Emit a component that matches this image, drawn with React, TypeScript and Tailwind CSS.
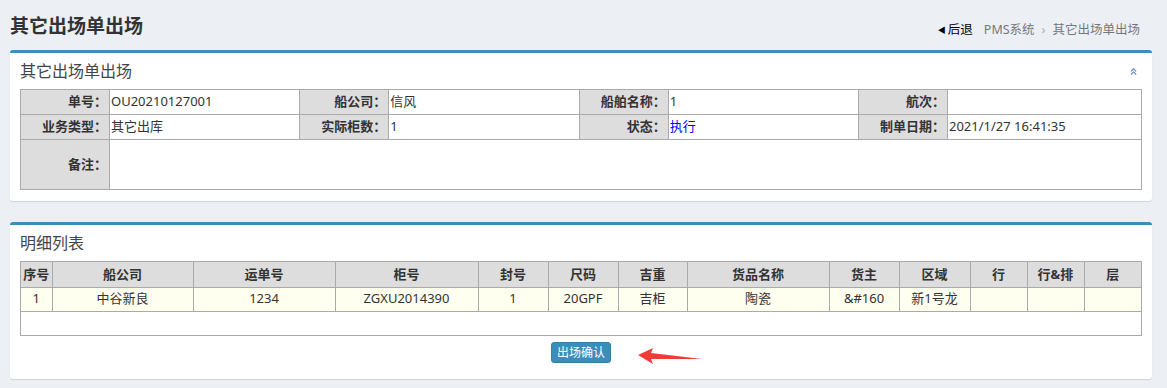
import { ChevronsUp } from "lucide-react";

const info = [
  [
    ["单号", "OU20210127001"],
    ["船公司", "信风"],
    ["船舶名称", "1"],
    ["航次", ""],
  ],
  [
    ["业务类型", "其它出库"],
    ["实际柜数", "1"],
    ["状态", "执行"],
    ["制单日期", "2021/1/27 16:41:35"],
  ],
];

const columns = [
  { title: "序号", w: "w-[31px]" },
  { title: "船公司", w: "w-[141px]" },
  { title: "运单号", w: "w-[142px]" },
  { title: "柜号", w: "w-[143px]" },
  { title: "封号", w: "w-[70px]" },
  { title: "尺码", w: "w-[70px]" },
  { title: "吉重", w: "w-[69px]" },
  { title: "货品名称", w: "w-[142px]" },
  { title: "货主", w: "w-[70px]" },
  { title: "区域", w: "w-[71px]" },
  { title: "行", w: "w-[57px]" },
  { title: "行&排", w: "w-[57px]" },
  { title: "层", w: "" },
];

const row = ["1", "中谷新良", "1234", "ZGXU2014390", "1", "20GPF", "吉柜", "陶瓷", "&#160", "新1号龙", "", "", ""];

function Box({ title, children, collapse }: { title: string; children: React.ReactNode; collapse?: boolean }) {
  return (
    <div className="bg-white border-t-[3px] border-[#3c8dbc] rounded-[3px] shadow-[0_1px_1px_rgba(0,0,0,0.12)]">
      <div className="h-[36px] flex items-center justify-between px-[10px]">
        <h3 className="text-[16px] leading-[20px] text-[#444]">{title}</h3>
        {collapse && <ChevronsUp size={11} strokeWidth={2.5} className="text-[#6b8fc7] mr-[3px]" />}
      </div>
      {children}
    </div>
  );
}

export default function App() {
  return (
    <div
      className="min-h-screen w-full bg-[#ecf0f5] pl-[10px] pr-[15px] text-[13px] text-[#333]"
      style={{ fontFamily: '"Noto Sans", "Noto Sans CJK SC", sans-serif' }}
    >
      <div className="h-[50px] flex justify-between">
        <h1 className="pt-[16px] text-[19px] leading-[20px] font-bold text-[#333]">其它出场单出场</h1>
        <div className="pt-[22px] pr-[12px] flex items-center h-[38px] text-[12.5px] leading-[16px] text-[#777]">
          <span className="text-black flex items-center">
            <span className="text-[8px] mr-[2px]">◀</span>后退
          </span>
          <span className="ml-[11px]">PMS系统</span>
          <span className="mx-[7px] text-[#aaa]">›</span>
          <span>其它出场单出场</span>
        </div>
      </div>

      <Box title="其它出场单出场" collapse>
        <div className="px-[10px] pb-[11px]">
          <table className="w-full table-fixed border-collapse">
            <colgroup>
              <col className="w-[89px]" />
              <col />
              <col className="w-[89px]" />
              <col />
              <col className="w-[89px]" />
              <col />
              <col className="w-[89px]" />
              <col className="w-[194px]" />
            </colgroup>
            <tbody>
              {info.map((r, i) => (
                <tr key={i} className="h-[25px]">
                  {r.map(([label, value]) => (
                    <>
                      <td key={label} className="bg-[#dddddd] border border-[#aaa] text-right pr-[2px] font-bold">
                        {label}：
                      </td>
                      <td className={`border border-[#aaa] pl-[1px] ${value === "执行" ? "text-[#0000ff]" : ""}`}>
                        {value}
                      </td>
                    </>
                  ))}
                </tr>
              ))}
              <tr className="h-[50px]">
                <td className="bg-[#dddddd] border border-[#aaa] text-right pr-[2px] font-bold">备注：</td>
                <td colSpan={7} className="border border-[#aaa]"></td>
              </tr>
            </tbody>
          </table>
        </div>
      </Box>

      <div className="mt-[21px]">
        <Box title="明细列表">
          <div className="px-[10px] pb-[16px]">
            <div className="border border-[#aaa] min-h-[75px]">
              <table className="w-full table-fixed border-collapse">
                <thead>
                  <tr className="h-[25px] bg-[#dddddd]">
                    {columns.map((c, i) => (
                      <th
                        key={c.title}
                        className={`${c.w} font-bold border-b border-[#aaa] ${i > 0 ? "border-l" : ""} text-center`}
                      >
                        {c.title}
                      </th>
                    ))}
                  </tr>
                </thead>
                <tbody>
                  <tr className="h-[24px] bg-[#fffff0]">
                    {row.map((v, i) => (
                      <td key={i} className={`border-b border-[#aaa] ${i > 0 ? "border-l" : ""} text-center`}>
                        {v}
                      </td>
                    ))}
                  </tr>
                </tbody>
              </table>
            </div>
            <div className="flex justify-center mt-[6px]">
              <div className="relative">
                <button className="h-[21px] w-[60px] rounded-[3px] bg-[#3c8dbc] border border-[#367fa9] text-white text-[12px] leading-[19px]">
                  出场确认
                </button>
                <svg
                  className="absolute left-full top-[6px] ml-[27px]"
                  width="66"
                  height="17"
                  viewBox="0 0 66 17"
                >
                  <polygon points="0,7 15,0 13,5 64,11 13,11 15,16" fill="#f23b36" />
                </svg>
              </div>
            </div>
          </div>
        </Box>
      </div>
    </div>
  );
}
